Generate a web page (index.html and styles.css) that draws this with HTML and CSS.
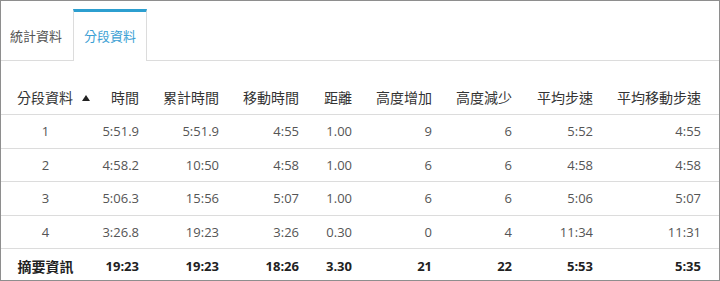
FILE: index.html
```html
<!DOCTYPE html>
<html lang="zh-Hant">
<head>
<meta charset="utf-8">
<title>分段資料</title>
<link rel="stylesheet" href="styles.css">
</head>
<body>
<div class="panel">
  <div class="tabs">
    <div class="tab">統計資料</div>
    <div class="tab active">分段資料</div>
  </div>
  <table class="splits">
    <colgroup>
      <col class="c-lap"><col class="c-time"><col class="c-w80"><col class="c-w80"><col class="c-dist"><col class="c-w80"><col class="c-w80"><col class="c-w81"><col class="c-last">
    </colgroup>
    <thead>
      <tr>
        <th class="lap-head">分段資料<svg class="sort" width="8" height="6" viewBox="0 0 8 6"><path d="M4 0L8 6H0Z" fill="#222"/></svg></th>
        <th>時間</th><th>累計時間</th><th>移動時間</th><th>距離</th><th>高度增加</th><th>高度減少</th><th>平均步速</th><th>平均移動步速</th>
      </tr>
    </thead>
    <tbody>
      <tr><td class="lap">1</td><td>5:51.9</td><td>5:51.9</td><td>4:55</td><td>1.00</td><td>9</td><td>6</td><td>5:52</td><td>4:55</td></tr>
      <tr><td class="lap">2</td><td>4:58.2</td><td>10:50</td><td>4:58</td><td>1.00</td><td>6</td><td>6</td><td>4:58</td><td>4:58</td></tr>
      <tr><td class="lap">3</td><td>5:06.3</td><td>15:56</td><td>5:07</td><td>1.00</td><td>6</td><td>6</td><td>5:06</td><td>5:07</td></tr>
      <tr><td class="lap">4</td><td>3:26.8</td><td>19:23</td><td>3:26</td><td>0.30</td><td>0</td><td>4</td><td>11:34</td><td>11:31</td></tr>
      <tr class="summary"><td class="lap">摘要資訊</td><td>19:23</td><td>19:23</td><td>18:26</td><td>3.30</td><td>21</td><td>22</td><td>5:53</td><td>5:35</td></tr>
    </tbody>
  </table>
</div>
</body>
</html>
```
FILE: styles.css
```css
html, body {
  margin: 0;
  padding: 0;
  background: #fff;
}
body {
  font-family: "Open Sans", "Noto Sans CJK TC", sans-serif;
  color: #555;
}
.panel {
  box-sizing: border-box;
  width: 720px;
  height: 281px;
  border: 1px solid #8e8e8e;
  overflow: hidden;
}
.tabs {
  display: flex;
  padding-top: 8px;
  border-bottom: 1px solid #dcdcdc;
  height: 51px;
}
.tab {
  box-sizing: border-box;
  height: 51px;
  padding: 3px 11px 0 9px;
  font-size: 13px;
  line-height: 48px;
  color: #555;
  font-family: "Noto Sans CJK TC", sans-serif;
}
.tab.active {
  border-top: 3px solid #2c9fd0;
  border-left: 1px solid #dcdcdc;
  border-right: 1px solid #dcdcdc;
  padding: 0 10px 0 10px;
  height: 52px;
  margin-bottom: -1px;
  background: #fff;
  color: #3c9fd4;
}
.splits {
  margin-top: 20px;
  width: 718px;
  table-layout: fixed;
  border-collapse: collapse;
}
.c-lap { width: 89px; }
.c-time { width: 67px; }
.c-w80 { width: 80px; }
.c-dist { width: 53px; }
.c-w81 { width: 81px; }
.c-last { width: 108px; }
.splits th {
  font-weight: normal;
  font-size: 14px;
  line-height: 19px;
  padding: 7px 18px 7px 0;
  text-align: right;
  color: #333;
  white-space: nowrap;
  border-bottom: 1px solid #dcdcdc;
}
.splits th.lap-head {
  text-align: left;
  padding-left: 16px;
  padding-right: 0;
}
.sort {
  margin-left: 9px;
  vertical-align: 2px;
}
.splits td {
  font-size: 13px;
  line-height: 1.42857;
  padding: 7px 18px 7px 0;
  text-align: right;
  color: #555;
  white-space: nowrap;
  border-bottom: 1px solid #dcdcdc;
}
.splits td.lap {
  text-align: center;
  padding-right: 0;
}
.splits tr.summary td {
  font-weight: bold;
  color: #222;
  border-bottom: none;
}
.splits tr.summary td.lap {
  font-size: 14px;
  font-family: "Noto Sans CJK TC", sans-serif;
}
```
